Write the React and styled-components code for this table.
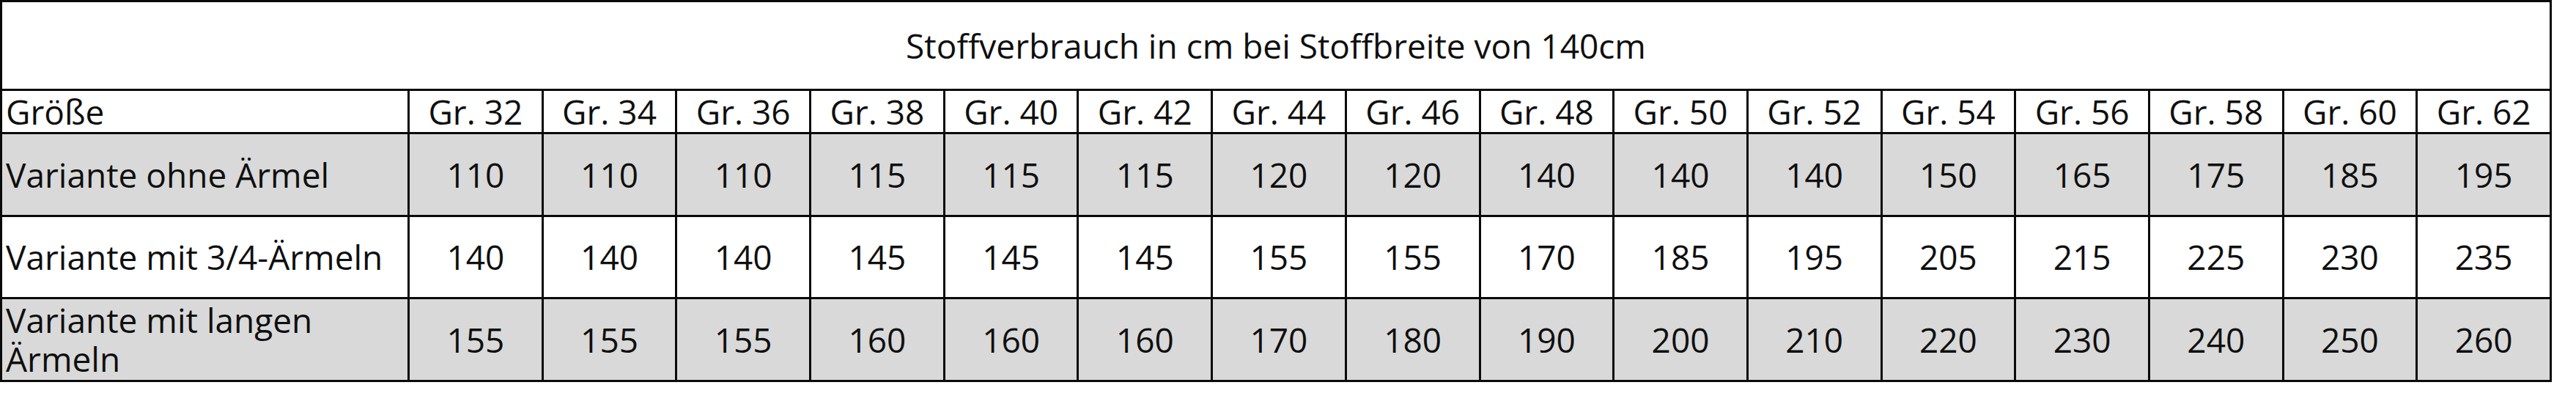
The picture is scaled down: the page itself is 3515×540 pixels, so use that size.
import React from "react";
import styled, { createGlobalStyle } from "styled-components";

const Global = createGlobalStyle`
  html, body { margin: 0; padding: 0; background: #ffffff; }
  body { font-family: "Open Sans", "Noto Sans", sans-serif; }
`;

const Table = styled.div`
  display: grid;
  width: 3482px;
  box-sizing: border-box;
  grid-template-columns: 553px repeat(16, 1fr);
  grid-template-rows: 118px 56px 110px 109px 110px;
  gap: 3px;
  padding: 3px;
  background: #0a0a0a;
  font-family: "Open Sans", "Noto Sans", sans-serif;
  font-size: 46px;
  color: #0f0f0f;
`;

const Title = styled.div`
  grid-column: 1 / -1;
  background: #ffffff;
  display: flex;
  align-items: center;
  justify-content: center;
  line-height: 1;
`;

const Cell = styled.div`
  background: ${(p) => (p.$shaded ? "#d9d9d9" : "#ffffff")};
  display: flex;
  align-items: center;
  justify-content: ${(p) => (p.$label ? "flex-start" : "center")};
  padding: ${(p) => (p.$label ? "0 0 0 5px" : "0")};
  line-height: 1.15;
  white-space: ${(p) => (p.$label ? "normal" : "nowrap")};
`;

const sizes = [32, 34, 36, 38, 40, 42, 44, 46, 48, 50, 52, 54, 56, 58, 60, 62];

const rows = [
  {
    label: "Variante ohne Ärmel",
    shaded: true,
    values: [110, 110, 110, 115, 115, 115, 120, 120, 140, 140, 140, 150, 165, 175, 185, 195],
  },
  {
    label: "Variante mit 3/4-Ärmeln",
    shaded: false,
    values: [140, 140, 140, 145, 145, 145, 155, 155, 170, 185, 195, 205, 215, 225, 230, 235],
  },
  {
    label: "Variante mit langen Ärmeln",
    shaded: true,
    values: [155, 155, 155, 160, 160, 160, 170, 180, 190, 200, 210, 220, 230, 240, 250, 260],
  },
];

export default function App() {
  return (
    <>
      <Global />
      <Table>
        <Title>Stoffverbrauch in cm bei Stoffbreite von 140cm</Title>
        <Cell $label>Größe</Cell>
        {sizes.map((s) => (
          <Cell key={s}>Gr. {s}</Cell>
        ))}
        {rows.map((r) => (
          <React.Fragment key={r.label}>
            <Cell $label $shaded={r.shaded}>
              {r.label}
            </Cell>
            {r.values.map((v, i) => (
              <Cell key={i} $shaded={r.shaded}>
                {v}
              </Cell>
            ))}
          </React.Fragment>
        ))}
      </Table>
    </>
  );
}
